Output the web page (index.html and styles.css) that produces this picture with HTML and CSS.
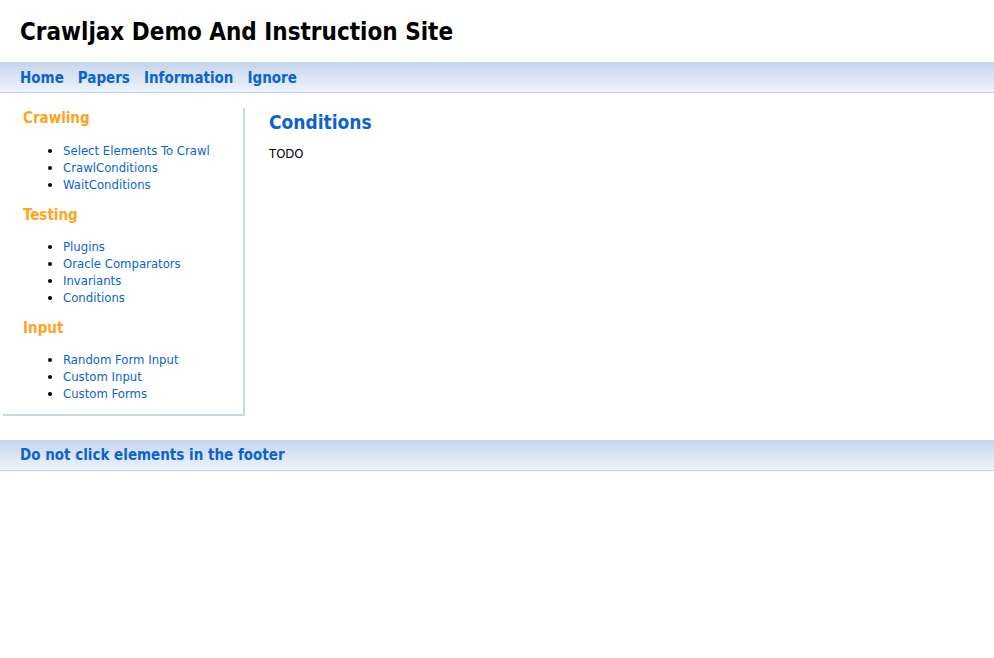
FILE: index.html
```html
<!DOCTYPE html>
<html>
<head>
<meta charset="utf-8">
<title>Crawljax Demo And Instruction Site</title>
<link rel="stylesheet" href="styles.css">
</head>
<body>
<header class="site-header">
  <h1 class="site-title">Crawljax Demo And Instruction Site</h1>
</header>
<nav class="topnav">
  <a href="#">Home</a>
  <a href="#">Papers</a>
  <a href="#">Information</a>
  <a href="#">Ignore</a>
</nav>
<div class="layout">
  <aside class="sidebar">
    <h3 class="side-head">Crawling</h3>
    <ul class="side-list">
      <li><a href="#">Select Elements To Crawl</a></li>
      <li><a href="#">CrawlConditions</a></li>
      <li><a href="#">WaitConditions</a></li>
    </ul>
    <h3 class="side-head">Testing</h3>
    <ul class="side-list">
      <li><a href="#">Plugins</a></li>
      <li><a href="#">Oracle Comparators</a></li>
      <li><a href="#">Invariants</a></li>
      <li><a href="#">Conditions</a></li>
    </ul>
    <h3 class="side-head">Input</h3>
    <ul class="side-list">
      <li><a href="#">Random Form Input</a></li>
      <li><a href="#">Custom Input</a></li>
      <li><a href="#">Custom Forms</a></li>
    </ul>
  </aside>
  <main class="content">
    <h2 class="page-title">Conditions</h2>
    <p class="text">TODO</p>
  </main>
</div>
<footer class="footer">Do not click elements in the footer</footer>
</body>
</html>
```
FILE: styles.css
```css
html, body {
  margin: 0;
  padding: 0;
  background: #fff;
  font-family: "DejaVu Sans Condensed", "DejaVu Sans", sans-serif;
  color: #000;
}
a { text-decoration: none; color: #0b63cf; }

.site-header {
  height: 62px;
  display: flex;
  align-items: center;
  padding-left: 20px;
}
.site-title {
  margin: 2px 0 0 0;
  font-size: 24px;
  font-weight: bold;
  color: #000;
}

.topnav {
  height: 30px;
  border-bottom: 1px solid #bdd1ee;
  background: linear-gradient(#c5d5ed, #eef3fb);
  display: flex;
  align-items: center;
  padding-left: 20px;
  gap: 14px;
}
.topnav a {
  font-weight: bold;
  font-size: 15px;
  padding-top: 2px;
}

.layout {
  display: flex;
  padding-top: 15px;
}
.sidebar {
  margin-left: 3px;
  border-right: 2px solid #c6d8f0;
  border-bottom: 2px solid #c6d8f0;
  padding: 0 0 12px 20px;
  box-sizing: border-box;
  width: 242px;
}
.side-head {
  margin: 0;
  font-size: 15px;
  font-weight: bold;
  color: #ffa41c;
  line-height: 21px;
}
.side-list {
  margin: 12px 0 12px 0;
  padding-left: 40px;
  font-size: 13px;
  line-height: 17px;
}
.side-list:first-of-type { margin-top: 13px; }
.side-list:last-child { margin-bottom: 0; }

.content {
  padding-left: 24px;
}
.page-title {
  margin: 3px 0 0 0;
  font-size: 19px;
  line-height: 23px;
  color: #0b63cf;
}
.text {
  margin: 12px 0 0 0;
  font-size: 13px;
}

.footer {
  margin-top: 24px;
  height: 30px;
  border-bottom: 1px solid #bdd1ee;
  background: linear-gradient(#c5d5ed, #eef3fb);
  display: flex;
  align-items: center;
  padding-left: 20px;
  font-weight: bold;
  font-size: 15px;
  color: #0b63cf;
}
```
